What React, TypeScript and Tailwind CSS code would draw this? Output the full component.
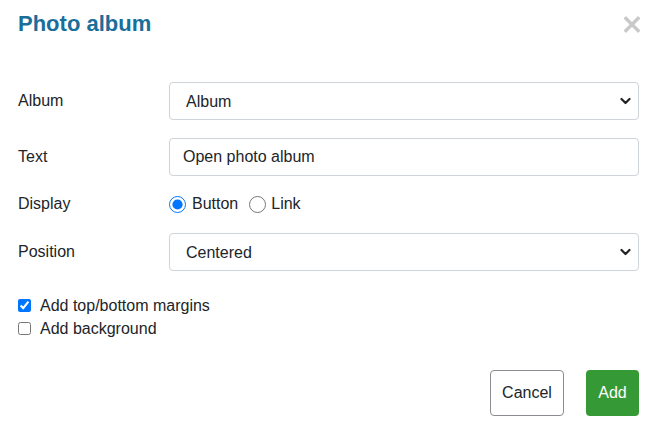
import React from "react";

const font = { fontFamily: '"Liberation Sans", Arial, sans-serif' };

function Chevron() {
  return (
    <svg className="absolute right-[8px] top-1/2 -translate-y-1/2 pointer-events-none" width="11" height="8" viewBox="0 0 11 8">
      <path d="M1.5 2 L5.5 6 L9.5 2" fill="none" stroke="#222" strokeWidth="2.2" strokeLinecap="round" strokeLinejoin="round" />
    </svg>
  );
}

function Select({ value }: { value: string }) {
  return (
    <div className="relative flex-1">
      <select
        className="appearance-none w-full h-[38px] border border-[#ced4da] rounded-[4px] pl-[16px] pr-[24px] pt-[1px] bg-white text-[16px] text-[#212529] outline-none"
        style={font}
        defaultValue={value}
      >
        <option>{value}</option>
      </select>
      <Chevron />
    </div>
  );
}

export default function App() {
  return (
    <div className="w-[647px] h-[426px] bg-white text-[#212529] text-[16px]" style={font}>
      <div className="flex items-center justify-between pl-[18px] pr-[7px] pt-[8px] h-[40px]">
        <h1 className="text-[22px] font-bold text-[#1a6e99] leading-none">Photo album</h1>
        <button className="w-[16px] h-[17px] flex items-center justify-center" aria-label="Close">
          <svg width="16" height="17" viewBox="0 0 16 17">
            <path d="M2 2.5 L14 14.5 M14 2.5 L2 14.5" stroke="#c9c9c9" strokeWidth="3.4" strokeLinecap="square" />
          </svg>
        </button>
      </div>
      <div className="pl-[18px] pr-[8px] pt-[42px] flex flex-col">
        <div className="flex items-center h-[38px]">
          <label className="w-[151px]">Album</label>
          <Select value="Album" />
        </div>
        <div className="flex items-center h-[38px] mt-[18px]">
          <label className="w-[151px]">Text</label>
          <input className="flex-1 h-[38px] border border-[#ced4da] rounded-[4px] px-[13px] text-[16px] outline-none" style={font} defaultValue="Open photo album" />
        </div>
        <div className="flex items-center h-[22px] mt-[17px]">
          <label className="w-[151px]">Display</label>
          <label className="flex items-center gap-[6px]">
            <input type="radio" name="d" defaultChecked className="w-[17px] h-[17px] m-0" />
            <span>Button</span>
          </label>
          <label className="flex items-center gap-[5px] ml-[11px]">
            <input type="radio" name="d" className="w-[17px] h-[17px] m-0" />
            <span>Link</span>
          </label>
        </div>
        <div className="flex items-center h-[38px] mt-[18px]">
          <label className="w-[151px]">Position</label>
          <Select value="Centered" />
        </div>
        <div className="flex flex-col mt-[25px] gap-[4px]">
          <label className="flex items-center gap-[9px] h-[19px]">
            <input type="checkbox" defaultChecked className="w-[13px] h-[13px] m-0" />
            <span>Add top/bottom margins</span>
          </label>
          <label className="flex items-center gap-[9px] h-[19px]">
            <input type="checkbox" className="w-[13px] h-[13px] m-0" />
            <span>Add background</span>
          </label>
        </div>
        <div className="flex justify-end gap-[22px] mt-[32px]">
          <button className="w-[74px] h-[46px] border border-[#8a8d91] rounded-[4px] bg-white text-[#212529]">Cancel</button>
          <button className="w-[53px] h-[46px] rounded-[4px] bg-[#359a35] text-white">Add</button>
        </div>
      </div>
    </div>
  );
}
